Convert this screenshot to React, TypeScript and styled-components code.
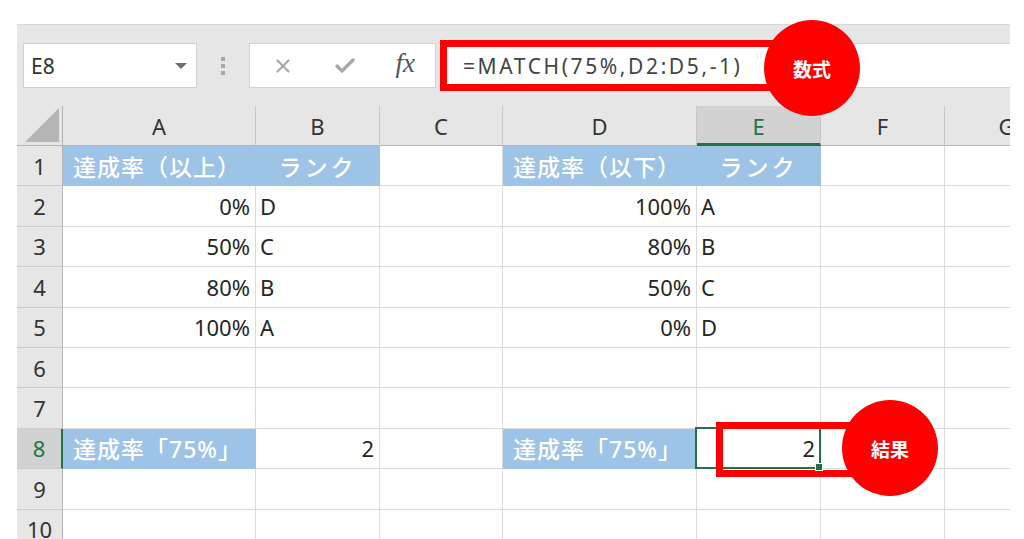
import styled, { createGlobalStyle, css } from "styled-components"
import { Fragment } from "react"
import { X, Check } from "lucide-react"

const GlobalStyle = createGlobalStyle`
  html, body {
    margin: 0;
    padding: 0;
    background: #fff;
  }
  body {
    font-family: "Noto Sans", "Noto Sans CJK JP", sans-serif;
  }
`

const GREEN = "#217346"
const BLUE = "#9dc3e6"

type Cell = {
  text?: string
  align?: "left" | "right" | "center" | "label"
  blue?: boolean
  selected?: boolean
}

const cols = ["A", "B", "C", "D", "E", "F", "G"]

const rows: Cell[][] = [
  [
    { text: "達成率（以上）", align: "label", blue: true },
    { text: "ランク", align: "center", blue: true },
    {},
    { text: "達成率（以下）", align: "label", blue: true },
    { text: "ランク", align: "center", blue: true },
    {},
    {},
  ],
  [{ text: "0%", align: "right" }, { text: "D" }, {}, { text: "100%", align: "right" }, { text: "A" }, {}, {}],
  [{ text: "50%", align: "right" }, { text: "C" }, {}, { text: "80%", align: "right" }, { text: "B" }, {}, {}],
  [{ text: "80%", align: "right" }, { text: "B" }, {}, { text: "50%", align: "right" }, { text: "C" }, {}, {}],
  [{ text: "100%", align: "right" }, { text: "A" }, {}, { text: "0%", align: "right" }, { text: "D" }, {}, {}],
  [{}, {}, {}, {}, {}, {}, {}],
  [{}, {}, {}, {}, {}, {}, {}],
  [
    { text: "達成率「75%」", align: "label", blue: true },
    { text: "2", align: "right" },
    {},
    { text: "達成率「75%」", align: "label", blue: true },
    { text: "2", align: "right", selected: true },
    {},
    {},
  ],
  [{}, {}, {}, {}, {}, {}, {}],
  [{}, {}, {}, {}, {}, {}, {}],
]

const App = () => {
  return (
    <Page>
      <GlobalStyle />
      <Frame>
        <FormulaBar>
          <NameBox>
            E8
            <Caret />
          </NameBox>
          <Grip>
            <i />
            <i />
            <i />
          </Grip>
          <ButtonBox>
            <X size={22} strokeWidth={2.4} color="#a8a8a8" />
            <Check size={24} strokeWidth={3.4} color="#a8a8a8" />
            <Fx>fx</Fx>
          </ButtonBox>
          <FormulaInput>=MATCH(75%,D2:D5,-1)</FormulaInput>
        </FormulaBar>

        <Sheet>
          <Corner>
            <svg width="34" height="34" viewBox="0 0 34 34">
              <polygon points="34,0 34,34 0,34" fill="#b5b5b5" />
            </svg>
          </Corner>
          {cols.map((c) => (
            <ColHead key={c} $active={c === "E"}>
              {c}
            </ColHead>
          ))}
          {rows.map((r, i) => (
            <Fragment key={i}>
              <RowHead $active={i === 7}>{i + 1}</RowHead>
              {r.map((cell, j) => (
                <GridCell
                  key={j}
                  $align={cell.align ?? "left"}
                  $blue={!!cell.blue}
                  $selected={!!cell.selected}
                >
                  {cell.text}
                </GridCell>
              ))}
            </Fragment>
          ))}
        </Sheet>
      </Frame>

      <Callout $left={440} $top={40} $width={350} $height={51} />
      <Bubble $cx={812} $cy={68}>数式</Bubble>
      <Callout $left={716} $top={422} $width={140} $height={55} />
      <Bubble $cx={890} $cy={448}>結果</Bubble>
    </Page>
  )
}

const Page = styled.div`
  position: relative;
  width: 1024px;
  height: 539px;
  overflow: hidden;
  background: #fff;
`

const Frame = styled.div`
  margin: 24px 0 0 17px;
  width: 993px;
  height: 515px;
  overflow: hidden;
  background: #e6e6e6;
  border-top: 1px solid #d8d8d8;
  box-sizing: border-box;
`

const FormulaBar = styled.div`
  display: flex;
  align-items: flex-start;
  height: 81px;
  padding: 18px 0 0 6px;
  box-sizing: border-box;
`

const NameBox = styled.div`
  position: relative;
  width: 174px;
  height: 45px;
  box-sizing: border-box;
  background: #fff;
  border: 1px solid #cfcfcf;
  padding-left: 7px;
  display: flex;
  align-items: center;
  font-size: 21px;
  color: #333;
`

const Caret = styled.span`
  position: absolute;
  right: 9px;
  top: 19px;
  width: 0;
  height: 0;
  border-left: 6px solid transparent;
  border-right: 6px solid transparent;
  border-top: 6px solid #6d6d6d;
`

const Grip = styled.div`
  width: 52px;
  height: 45px;
  display: flex;
  flex-direction: column;
  align-items: center;
  justify-content: center;
  gap: 3px;

  i {
    display: block;
    width: 4px;
    height: 4px;
    background: #a8a8a8;
  }
`

const ButtonBox = styled.div`
  width: 187px;
  height: 45px;
  box-sizing: border-box;
  background: #fff;
  border: 1px solid #d2d2d2;
  display: flex;
  align-items: center;
  justify-content: space-between;
  padding: 0 20px 0 22px;
`

const Fx = styled.span`
  font-family: "Liberation Serif", serif;
  font-style: italic;
  font-size: 27px;
  color: #555;
  margin-top: -4px;
`

const FormulaInput = styled.div`
  flex: 1;
  margin-left: 4px;
  height: 45px;
  box-sizing: border-box;
  background: #fff;
  border: 1px solid #d2d2d2;
  border-right: none;
  display: flex;
  align-items: center;
  padding-left: 22px;
  font-size: 21px;
  letter-spacing: 2.6px;
  color: #444;
`

const Sheet = styled.div`
  display: grid;
  grid-template-columns: 46px 193px 124px 123px 194px 124px 124px 124px;
  grid-template-rows: 40px repeat(10, 40.4px);
`

const headText = css`
  display: flex;
  align-items: center;
  justify-content: center;
  box-sizing: border-box;
  font-size: 22px;
  color: #333;
`

const Corner = styled.div`
  display: flex;
  align-items: flex-end;
  justify-content: flex-end;
  padding: 0 3px 3px 0;
  box-sizing: border-box;
  border-right: 1px solid #b4b4b4;
  border-bottom: 1px solid #b4b4b4;
`

const ColHead = styled.div<{ $active: boolean }>`
  ${headText}
  border-right: 1px solid #c8c8c8;
  border-bottom: ${(p) => (p.$active ? `3px solid ${GREEN}` : "1px solid #b4b4b4")};
  padding-top: ${(p) => (p.$active ? "2px" : "0")};
  background: ${(p) => (p.$active ? "#d2d2d2" : "#e6e6e6")};
  color: ${(p) => (p.$active ? GREEN : "#333")};
`

const RowHead = styled.div<{ $active: boolean }>`
  ${headText}
  border-bottom: 1px solid #cbcbcb;
  border-right: ${(p) => (p.$active ? `2px solid ${GREEN}` : "1px solid #b4b4b4")};
  background: ${(p) => (p.$active ? "#d2d2d2" : "#e6e6e6")};
  color: ${(p) => (p.$active ? GREEN : "#333")};
`

const GridCell = styled.div<{ $align: string; $blue: boolean; $selected: boolean }>`
  position: relative;
  display: flex;
  align-items: center;
  box-sizing: border-box;
  white-space: nowrap;
  overflow: visible;
  font-size: 22px;
  color: #262626;
  background: ${(p) => (p.$blue ? BLUE : "#fff")};
  border-right: 1px solid ${(p) => (p.$blue ? BLUE : "#dadada")};
  border-bottom: 1px solid ${(p) => (p.$blue ? BLUE : "#dadada")};

  ${(p) =>
    p.$align === "right" &&
    css`
      justify-content: flex-end;
      padding-right: 5px;
    `}
  ${(p) =>
    p.$align === "left" &&
    css`
      padding-left: 4px;
    `}
  ${(p) =>
    p.$align === "center" &&
    css`
      justify-content: center;
      color: #fff;
      font-size: 23px;
      font-weight: 500;
      letter-spacing: 3px;
    `}
  ${(p) =>
    p.$align === "label" &&
    css`
      padding-left: 10px;
      color: #fff;
      font-size: 23px;
      font-weight: 500;
      letter-spacing: 1px;
    `}

  ${(p) =>
    p.$selected &&
    css`
      &::after {
        content: "";
        position: absolute;
        left: -2px;
        top: -2px;
        right: -1px;
        bottom: -1px;
        border: 2px solid ${GREEN};
        pointer-events: none;
      }
      &::before {
        content: "";
        position: absolute;
        right: -3px;
        bottom: -3px;
        width: 6px;
        height: 6px;
        background: ${GREEN};
        border: 1px solid #fff;
        z-index: 1;
      }
    `}
`

const Callout = styled.div<{ $left: number; $top: number; $width: number; $height: number }>`
  position: absolute;
  left: ${(p) => p.$left}px;
  top: ${(p) => p.$top}px;
  width: ${(p) => p.$width}px;
  height: ${(p) => p.$height}px;
  box-sizing: border-box;
  border: 7px solid #ff0000;
`

const Bubble = styled.div<{ $cx: number; $cy: number }>`
  position: absolute;
  left: ${(p) => p.$cx - 48}px;
  top: ${(p) => p.$cy - 48}px;
  width: 96px;
  height: 96px;
  border-radius: 50%;
  background: #ff0000;
  color: #fff;
  display: flex;
  align-items: center;
  justify-content: center;
  font-family: "Noto Sans CJK JP", sans-serif;
  font-weight: 700;
  font-size: 19px;
`

export default App
